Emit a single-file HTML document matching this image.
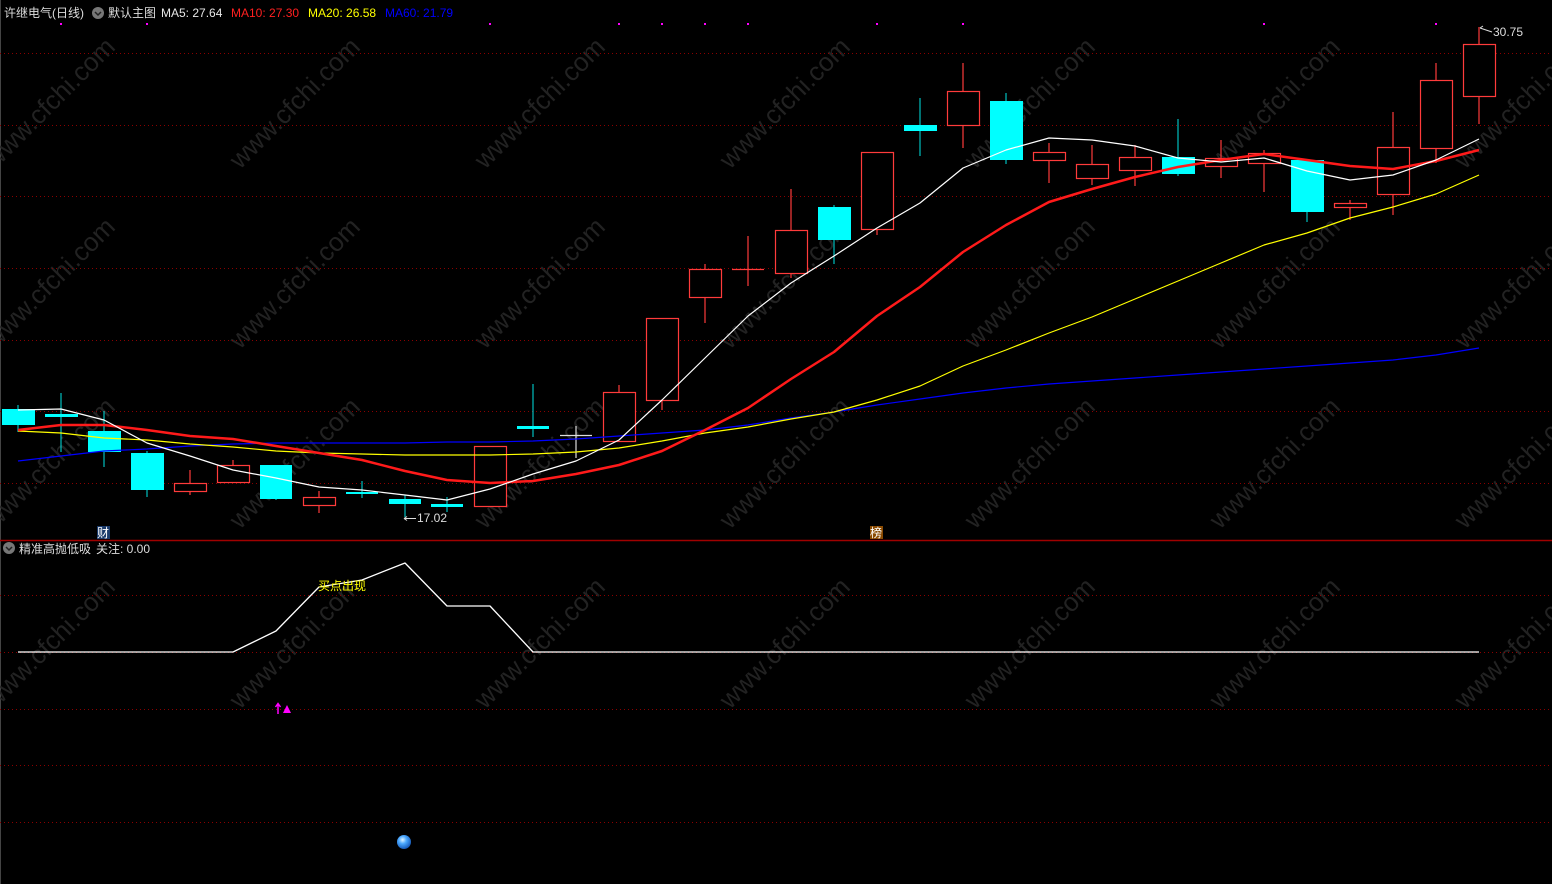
<!DOCTYPE html><html><head><meta charset="utf-8"><style>
html,body{margin:0;padding:0;background:#000;width:1552px;height:884px;overflow:hidden}
svg{display:block}
text{font-family:"Liberation Sans","Noto Sans CJK SC",sans-serif}
</style></head><body>
<svg width="1552" height="884" viewBox="0 0 1552 884" xmlns="http://www.w3.org/2000/svg">
<rect width="1552" height="884" fill="#000"/>
<line x1="0.5" y1="0" x2="0.5" y2="884" stroke="#444"/>
<g fill="#262626" font-size="26" opacity="0.9">
<text transform="translate(-5,170) rotate(-45)">www.cfchi.com</text>
<text transform="translate(240,170) rotate(-45)">www.cfchi.com</text>
<text transform="translate(485,170) rotate(-45)">www.cfchi.com</text>
<text transform="translate(730,170) rotate(-45)">www.cfchi.com</text>
<text transform="translate(975,170) rotate(-45)">www.cfchi.com</text>
<text transform="translate(1220,170) rotate(-45)">www.cfchi.com</text>
<text transform="translate(1465,170) rotate(-45)">www.cfchi.com</text>
<text transform="translate(-5,350) rotate(-45)">www.cfchi.com</text>
<text transform="translate(240,350) rotate(-45)">www.cfchi.com</text>
<text transform="translate(485,350) rotate(-45)">www.cfchi.com</text>
<text transform="translate(730,350) rotate(-45)">www.cfchi.com</text>
<text transform="translate(975,350) rotate(-45)">www.cfchi.com</text>
<text transform="translate(1220,350) rotate(-45)">www.cfchi.com</text>
<text transform="translate(1465,350) rotate(-45)">www.cfchi.com</text>
<text transform="translate(-5,530) rotate(-45)">www.cfchi.com</text>
<text transform="translate(240,530) rotate(-45)">www.cfchi.com</text>
<text transform="translate(485,530) rotate(-45)">www.cfchi.com</text>
<text transform="translate(730,530) rotate(-45)">www.cfchi.com</text>
<text transform="translate(975,530) rotate(-45)">www.cfchi.com</text>
<text transform="translate(1220,530) rotate(-45)">www.cfchi.com</text>
<text transform="translate(1465,530) rotate(-45)">www.cfchi.com</text>
<text transform="translate(-5,710) rotate(-45)">www.cfchi.com</text>
<text transform="translate(240,710) rotate(-45)">www.cfchi.com</text>
<text transform="translate(485,710) rotate(-45)">www.cfchi.com</text>
<text transform="translate(730,710) rotate(-45)">www.cfchi.com</text>
<text transform="translate(975,710) rotate(-45)">www.cfchi.com</text>
<text transform="translate(1220,710) rotate(-45)">www.cfchi.com</text>
<text transform="translate(1465,710) rotate(-45)">www.cfchi.com</text>
</g>
<g stroke="#8b0000" stroke-dasharray="1,3" stroke-width="1">
<line x1="0" y1="53.5" x2="1552" y2="53.5"/><line x1="0" y1="125.5" x2="1552" y2="125.5"/>
<line x1="0" y1="196.5" x2="1552" y2="196.5"/><line x1="0" y1="268.5" x2="1552" y2="268.5"/>
<line x1="0" y1="340.5" x2="1552" y2="340.5"/><line x1="0" y1="411.5" x2="1552" y2="411.5"/>
<line x1="0" y1="483.5" x2="1552" y2="483.5"/>
<line x1="0" y1="595.5" x2="1552" y2="595.5"/><line x1="0" y1="652.5" x2="1552" y2="652.5"/>
<line x1="0" y1="709.5" x2="1552" y2="709.5"/><line x1="0" y1="765.5" x2="1552" y2="765.5"/>
<line x1="0" y1="822.5" x2="1552" y2="822.5"/>
</g>
<line x1="0" y1="540.5" x2="1552" y2="540.5" stroke="#a00000" stroke-width="1.5"/>
<g fill="#ff00ff">
<rect x="60" y="23" width="2" height="2"/><rect x="146" y="23" width="2" height="2"/><rect x="489" y="23" width="2" height="2"/>
<rect x="618" y="23" width="2" height="2"/><rect x="661" y="23" width="2" height="2"/><rect x="704" y="23" width="2" height="2"/>
<rect x="747" y="23" width="2" height="2"/><rect x="876" y="23" width="2" height="2"/><rect x="962" y="23" width="2" height="2"/>
<rect x="1263" y="23" width="2" height="2"/><rect x="1435" y="23" width="2" height="2"/>
</g>
<g stroke="#00e5e5" fill="#00ffff">
<line x1="18" y1="405" x2="18" y2="432"/><rect x="2" y="409" width="33" height="16" stroke="none"/>
<line x1="61" y1="393" x2="61" y2="452"/><rect x="45" y="414" width="33" height="3" stroke="none"/>
<line x1="104" y1="411" x2="104" y2="467"/><rect x="88" y="431" width="33" height="21" stroke="none"/>
<line x1="147" y1="451" x2="147" y2="497"/><rect x="131" y="453" width="33" height="37" stroke="none"/>
<line x1="276" y1="465" x2="276" y2="500"/><rect x="260" y="465" width="32" height="34" stroke="none"/>
<line x1="362" y1="481" x2="362" y2="498"/><rect x="346" y="492" width="32" height="2" stroke="none"/>
<line x1="405" y1="495" x2="405" y2="517"/><rect x="389" y="499" width="32" height="5" stroke="none"/>
<line x1="447" y1="497" x2="447" y2="512"/><rect x="431" y="504" width="32" height="3" stroke="none"/>
<line x1="533" y1="384" x2="533" y2="437"/><rect x="517" y="426" width="32" height="3" stroke="none"/>
<line x1="834" y1="205" x2="834" y2="264"/><rect x="818" y="207" width="33" height="33" stroke="none"/>
<line x1="920" y1="98" x2="920" y2="156"/><rect x="904" y="125" width="33" height="6" stroke="none"/>
<line x1="1006" y1="93" x2="1006" y2="164"/><rect x="990" y="101" width="33" height="59" stroke="none"/>
<line x1="1178" y1="119" x2="1178" y2="176"/><rect x="1162" y="157" width="33" height="17" stroke="none"/>
<line x1="1307" y1="160" x2="1307" y2="222"/><rect x="1291" y="160" width="33" height="52" stroke="none"/>
</g>
<g stroke="#ff3b3b" fill="#000" stroke-width="1.2">
<line x1="190" y1="470" x2="190" y2="495"/><rect x="174.5" y="483.5" width="32" height="8"/>
<line x1="233" y1="460" x2="233" y2="482"/><rect x="217.5" y="465.5" width="32" height="17"/>
<line x1="319" y1="491" x2="319" y2="513"/><rect x="303.5" y="497.5" width="32" height="8"/>
<rect x="474.5" y="446.5" width="32" height="60"/>
<line x1="576" y1="426" x2="576" y2="458" stroke="#ddd"/><line x1="560" y1="435.5" x2="592" y2="435.5" stroke="#ddd"/>
<line x1="619" y1="385" x2="619" y2="441"/><rect x="603.5" y="392.5" width="32" height="49"/>
<line x1="662" y1="318" x2="662" y2="410"/><rect x="646.5" y="318.5" width="32" height="82"/>
<line x1="705" y1="264" x2="705" y2="323"/><rect x="689.5" y="269.5" width="32" height="28"/>
<line x1="748" y1="236" x2="748" y2="286"/><line x1="732" y1="269.5" x2="764" y2="269.5"/>
<line x1="791" y1="189" x2="791" y2="278"/><rect x="775.5" y="230.5" width="32" height="43"/>
<line x1="877" y1="152" x2="877" y2="235"/><rect x="861.5" y="152.5" width="32" height="77"/>
<line x1="963" y1="63" x2="963" y2="148"/><rect x="947.5" y="91.5" width="32" height="34"/>
<line x1="1049" y1="143" x2="1049" y2="183"/><rect x="1033.5" y="152.5" width="32" height="8"/>
<line x1="1092" y1="145" x2="1092" y2="185"/><rect x="1076.5" y="164.5" width="32" height="14"/>
<line x1="1135" y1="145" x2="1135" y2="186"/><rect x="1119.5" y="157.5" width="32" height="13"/>
<line x1="1221" y1="140" x2="1221" y2="178"/><rect x="1205.5" y="158.5" width="32" height="8"/>
<line x1="1264" y1="150" x2="1264" y2="192"/><rect x="1248.5" y="153.5" width="32" height="10"/>
<line x1="1350" y1="200" x2="1350" y2="220"/><rect x="1334.5" y="203.5" width="32" height="4"/>
<line x1="1393" y1="112" x2="1393" y2="215"/><rect x="1377.5" y="147.5" width="32" height="47"/>
<line x1="1436" y1="63" x2="1436" y2="163"/><rect x="1420.5" y="80.5" width="32" height="68"/>
<line x1="1479" y1="27" x2="1479" y2="124"/><rect x="1463.5" y="44.5" width="32" height="52"/>
</g>
<g fill="none" stroke-linejoin="round">
<polyline stroke="#0000ff" stroke-width="1.2" points="18,461 61,456 104,451 147,449 190,446 233,444 276,443 319,443 362,443 405,443 447,442 490,442 533,441 576,439 619,436 662,433 705,430 748,425 791,418 834,412 877,405 920,399 963,393 1006,388 1049,384 1092,381 1135,378 1178,375 1221,372 1264,369 1307,366 1350,363 1393,360 1436,355 1479,348"/>
<polyline stroke="#ffff00" stroke-width="1.2" points="18,431 61,433 104,438 147,440 190,444 233,447 276,451 319,453 362,454 405,455 447,455 490,455 533,454 576,452 619,448 662,441 705,433 748,427 791,419 834,412 877,400 920,386 963,366 1006,350 1049,333 1092,317 1135,299 1178,281 1221,263 1264,245 1307,233 1350,218 1393,207 1436,194 1479,175"/>
<polyline stroke="#ff1a1a" stroke-width="2.5" points="18,430 61,425 104,425 147,430 190,436 233,439 276,446 319,453 362,460 405,471 447,480 490,483 533,481 576,474 619,465 662,451 705,430 748,408 791,379 834,352 877,316 920,287 963,252 1006,225 1049,202 1092,189 1135,177 1178,167 1221,160 1264,154 1307,160 1350,166 1393,169 1436,161 1479,150"/>
<polyline stroke="#fff" stroke-width="1.2" points="18,410 61,409 104,420 147,443 190,456 233,470 276,478 319,487 362,490 405,495 447,500 490,489 533,474 576,461 619,440 662,400 705,358 748,316 791,283 834,256 877,228 920,203 963,168 1006,150 1049,138 1092,140 1135,146 1178,158 1221,162 1264,158 1307,171 1350,180 1393,175 1436,160 1479,139"/>
<polyline stroke="#fff" stroke-width="1.3" points="18,652 233,652 276,631 319,587 362,580 405,563 447,606 490,606 533,652 1479,652"/>
</g>
<g font-size="12">
<text x="4" y="17" fill="#ddd">许继电气(日线)</text>
<circle cx="98" cy="13" r="6" fill="#777"/><path d="M95,12 L98,15 L101,12" stroke="#222" stroke-width="1.5" fill="none"/>
<text x="108" y="17" fill="#ddd">默认主图</text>
<text x="161" y="17" fill="#e8e8e8">MA5: 27.64</text>
<text x="231" y="17" fill="#ff2020">MA10: 27.30</text>
<text x="308" y="17" fill="#ffff00">MA20: 26.58</text>
<text x="385" y="17" fill="#0000ff">MA60: 21.79</text>
<circle cx="9" cy="548" r="6" fill="#777"/><path d="M6,547 L9,550 L12,547" stroke="#222" stroke-width="1.5" fill="none"/>
<text x="19" y="553" fill="#ddd">精准高抛低吸</text>
<text x="96" y="553" fill="#ddd">关注: 0.00</text>
<text x="417" y="522" fill="#ddd">17.02</text>
<text x="1493" y="36" fill="#ddd">30.75</text>
<text x="318" y="590" fill="#ffff00">买点出现</text>
</g>
<path d="M404,518.5 H416 M404,518.5 l3,-2 M404,518.5 l3,2" stroke="#ddd" fill="none"/>
<path d="M1480,28 L1492,32 M1480,28 l3,-2" stroke="#ddd" fill="none"/>
<rect x="97" y="526" width="13" height="13" fill="#1a3a6a"/>
<text x="97" y="537" fill="#fff" font-size="12">财</text>
<rect x="870" y="526" width="13" height="13" fill="#8a4a00"/>
<text x="870" y="537" fill="#fff" font-size="12">榜</text>
<path d="M278,714 V704 M275.5,707 L278,703.5 L280.5,707" stroke="#ff00ff" stroke-width="1.5" fill="none"/>
<polygon points="287,705 283,713 291,713" fill="#ff00ff"/>
<defs><radialGradient id="b" cx="0.4" cy="0.35" r="0.7"><stop offset="0" stop-color="#e0f4ff"/><stop offset="0.4" stop-color="#4aa8ff"/><stop offset="1" stop-color="#1050b0"/></radialGradient></defs>
<circle cx="404" cy="842" r="7" fill="url(#b)"/>
</svg>
</body></html>
